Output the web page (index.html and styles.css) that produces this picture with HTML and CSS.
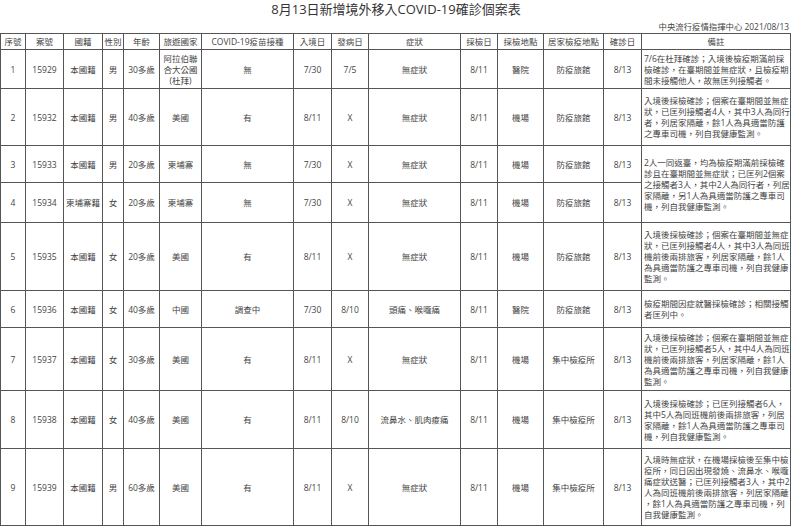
FILE: index.html
```html
<!DOCTYPE html>
<html lang="zh-Hant-TW">
<head>
<meta charset="utf-8">
<title>8月13日新增境外移入COVID-19確診個案表</title>
<link rel="stylesheet" href="styles.css">
</head>
<body>
<div class="page">
  <h1 class="title">8月13日新增境外移入COVID-19確診個案表</h1>
  <div class="source">中央流行疫情指揮中心 2021/08/13</div>
  <table class="cases">
    <colgroup>
      <col class="c-no"><col class="c-case"><col class="c-nat"><col class="c-sex"><col class="c-age"><col class="c-travel"><col class="c-vac"><col class="c-entry"><col class="c-onset"><col class="c-sym"><col class="c-test"><col class="c-place"><col class="c-home"><col class="c-conf"><col class="c-note">
    </colgroup>
    <thead>
      <tr>
        <th>序號</th><th>案號</th><th>國籍</th><th>性別</th><th>年齡</th><th>旅遊國家</th><th>COVID-19疫苗接種</th><th>入境日</th><th>發病日</th><th>症狀</th><th>採檢日</th><th>採檢地點</th><th>居家檢疫地點</th><th>確診日</th><th>備註</th>
      </tr>
    </thead>
    <tbody>
      <tr class="r1">
        <td>1</td><td>15929</td><td>本國籍</td><td>男</td><td>30多歲</td><td>阿拉伯聯<br>合大公國<br>(杜拜)</td><td>無</td><td>7/30</td><td>7/5</td><td>無症狀</td><td>8/11</td><td>醫院</td><td>防疫旅館</td><td>8/13</td>
        <td class="note">7/6在杜拜確診；入境後檢疫期滿前採<br>檢確診，在臺期間並無症狀，且檢疫期<br>間未接觸他人，故無匡列接觸者。</td>
      </tr>
      <tr class="r2">
        <td>2</td><td>15932</td><td>本國籍</td><td>男</td><td>40多歲</td><td>美國</td><td>有</td><td>8/11</td><td>X</td><td>無症狀</td><td>8/11</td><td>機場</td><td>防疫旅館</td><td>8/13</td>
        <td class="note">入境後採檢確診；個案在臺期間並無症<br>狀，已匡列接觸者4人，其中3人為同行<br>者，列居家隔離，餘1人為具適當防護<br>之專車司機，列自我健康監測。</td>
      </tr>
      <tr class="r3">
        <td>3</td><td>15933</td><td>本國籍</td><td>男</td><td>20多歲</td><td>柬埔寨</td><td>無</td><td>7/30</td><td>X</td><td>無症狀</td><td>8/11</td><td>機場</td><td>防疫旅館</td><td>8/13</td>
        <td class="note" rowspan="2">2人一同返臺，均為檢疫期滿前採檢確<br>診且在臺期間並無症狀；已匡列2個案<br>之接觸者3人，其中2人為同行者，列居<br>家隔離，另1人為具適當防護之專車司<br>機，列自我健康監測。</td>
      </tr>
      <tr class="r4">
        <td>4</td><td>15934</td><td>柬埔寨籍</td><td>女</td><td>20多歲</td><td>柬埔寨</td><td>無</td><td>7/30</td><td>X</td><td>無症狀</td><td>8/11</td><td>機場</td><td>防疫旅館</td><td>8/13</td>
      </tr>
      <tr class="r5">
        <td>5</td><td>15935</td><td>本國籍</td><td>女</td><td>20多歲</td><td>美國</td><td>有</td><td>8/11</td><td>X</td><td>無症狀</td><td>8/11</td><td>機場</td><td>防疫旅館</td><td>8/13</td>
        <td class="note">入境後採檢確診；個案在臺期間並無症<br>狀，已匡列接觸者4人，其中3人為同班<br>機前後兩排旅客，列居家隔離，餘1人<br>為具適當防護之專車司機，列自我健康<br>監測。</td>
      </tr>
      <tr class="r6">
        <td>6</td><td>15936</td><td>本國籍</td><td>女</td><td>40多歲</td><td>中國</td><td>調查中</td><td>7/30</td><td>8/10</td><td>頭痛、喉嚨痛</td><td>8/11</td><td>醫院</td><td>防疫旅館</td><td>8/13</td>
        <td class="note">檢疫期間因症就醫採檢確診；相關接觸<br>者匡列中。</td>
      </tr>
      <tr class="r7">
        <td>7</td><td>15937</td><td>本國籍</td><td>女</td><td>30多歲</td><td>美國</td><td>有</td><td>8/11</td><td>X</td><td>無症狀</td><td>8/11</td><td>機場</td><td>集中檢疫所</td><td>8/13</td>
        <td class="note">入境後採檢確診；個案在臺期間並無症<br>狀，已匡列接觸者5人，其中4人為同班<br>機前後兩排旅客，列居家隔離，餘1人<br>為具適當防護之專車司機，列自我健康<br>監測。</td>
      </tr>
      <tr class="r8">
        <td>8</td><td>15938</td><td>本國籍</td><td>女</td><td>40多歲</td><td>美國</td><td>有</td><td>8/11</td><td>8/10</td><td>流鼻水、肌肉痠痛</td><td>8/11</td><td>機場</td><td>集中檢疫所</td><td>8/13</td>
        <td class="note">入境後採檢確診；已匡列接觸者6人，<br>其中5人為同班機前後兩排旅客，列居<br>家隔離，餘1人為具適當防護之專車司<br>機，列自我健康監測。</td>
      </tr>
      <tr class="r9">
        <td>9</td><td>15939</td><td>本國籍</td><td>男</td><td>60多歲</td><td>美國</td><td>有</td><td>8/11</td><td>X</td><td>無症狀</td><td>8/11</td><td>機場</td><td>集中檢疫所</td><td>8/13</td>
        <td class="note">入境時無症狀，在機場採檢後至集中檢<br>疫所，同日因出現發燒、流鼻水、喉嚨<br>痛症狀送醫；已匡列接觸者3人，其中2<br>人為同班機前後兩排旅客，列居家隔離<br>，餘1人為具適當防護之專車司機，列<br>自我健康監測。</td>
      </tr>
    </tbody>
  </table>
</div>
</body>
</html>
```

FILE: styles.css
```css
html, body {
  margin: 0;
  padding: 0;
  background: #ffffff;
}

body {
  font-family: "Open Sans", "Noto Sans CJK TC", sans-serif;
  color: #444444;
}

.page {
  width: 792px;
  display: flex;
  flex-direction: column;
}

.title {
  margin: 0;
  height: 18px;
  font-size: 13px;
  line-height: 18px;
  font-weight: normal;
  text-align: center;
  color: #333333;
}

.source {
  margin: 2px 3px 0 0;
  height: 13px;
  font-size: 8.4px;
  line-height: 13px;
  text-align: right;
  color: #444444;
}

.cases {
  table-layout: fixed;
  border-collapse: collapse;
  width: 790px;
  font-size: 8.5px;
  color: #444444;
}

.cases th,
.cases td {
  border: 1px solid #555555;
  padding: 0 1px;
  text-align: center;
  vertical-align: middle;
  font-weight: normal;
  white-space: nowrap;
  overflow: hidden;
  line-height: 11px;
}

.cases th {
  height: 15px;
}

.cases td.note {
  text-align: left;
  padding: 0 2px;
}

.c-no { width: 25px; }
.c-case { width: 38px; }
.c-nat { width: 39px; }
.c-sex { width: 21px; }
.c-age { width: 36px; }
.c-travel { width: 42px; }
.c-vac { width: 92px; }
.c-entry { width: 38px; }
.c-onset { width: 37px; }
.c-sym { width: 92px; }
.c-test { width: 37px; }
.c-place { width: 46px; }
.c-home { width: 60px; }
.c-conf { width: 38px; }
.c-note { width: 149px; }

.r1 { height: 39px; }
.r2 { height: 57px; }
.r3 { height: 37px; }
.r4 { height: 40px; }
.r5 { height: 68px; }
.r6 { height: 37px; }
.r7 { height: 63px; }
.r8 { height: 58px; }
.r9 { height: 77px; }
```
